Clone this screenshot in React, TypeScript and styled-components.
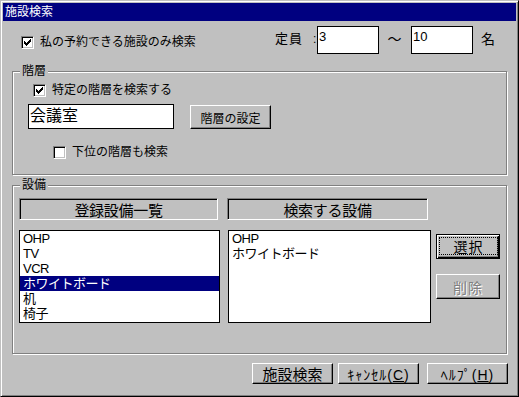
import React from "react";
import styled, { createGlobalStyle } from "styled-components";

const GlobalStyle = createGlobalStyle`
  html, body { margin: 0; padding: 0; background: #c0c0c0; }
  body {
    font-family: "Liberation Sans", "Noto Sans CJK JP", sans-serif;
    font-size: 12px;
    color: #000;
  }
  * { box-sizing: border-box; }
`;

const Window = styled.div`
  width: 519px;
  height: 397px;
  background: #c0c0c0;
  border: 1px solid;
  border-color: #c0c0c0 #000 #000 #c0c0c0;
  box-shadow: inset 1px 1px #fff, inset -1px -1px #808080;
  padding: 2px;
  display: flex;
  flex-direction: column;
`;

const TitleBar = styled.div`
  height: 18px;
  background: #000080;
  color: #fff;
  font-size: 12px;
  line-height: 18px;
  padding-left: 2px;
  white-space: nowrap;
`;

const Body = styled.div`
  display: flex;
  flex-direction: column;
  padding: 5px 9px 0;
`;

const TopRow = styled.div`
  display: flex;
  align-items: flex-start;
  height: 28px;
`;

const CheckOption = styled.div<{ $ml: number; $mt: number }>`
  display: flex;
  align-items: center;
  gap: 6px;
  height: 13px;
  margin-left: ${(p) => p.$ml}px;
  margin-top: ${(p) => p.$mt}px;
  font-size: 12px;
  line-height: 13px;
  white-space: nowrap;
`;

const Box = styled.span`
  width: 13px;
  height: 13px;
  flex: none;
  background: #fff;
  border: 1px solid;
  border-color: #808080 #fff #fff #808080;
  box-shadow: inset 1px 1px #000, inset -1px -1px #c0c0c0;
  display: flex;
  align-items: center;
  justify-content: center;
`;

const Capacity = styled.div`
  display: flex;
  align-items: flex-start;
  margin-left: auto;
  margin-right: 11px;
`;

const CapText = styled.span<{ $w?: number; $mt: number; $fs: number; $center?: boolean; $ml?: number }>`
  ${(p) => (p.$w ? `width: ${p.$w}px;` : "")}
  margin-top: ${(p) => p.$mt}px;
  margin-left: ${(p) => p.$ml ?? 0}px;
  font-size: ${(p) => p.$fs}px;
  line-height: 14px;
  text-align: ${(p) => (p.$center ? "center" : "left")};
  letter-spacing: 1px;
  white-space: nowrap;
  flex: none;
`;

const EditBox = styled.div<{ $w: number; $h: number; $fs: number; $pt: number }>`
  width: ${(p) => p.$w}px;
  height: ${(p) => p.$h}px;
  flex: none;
  background: #fff;
  border: 1px solid #000;
  padding: ${(p) => p.$pt}px 0 0 1px;
  font-size: ${(p) => p.$fs}px;
  line-height: ${(p) => p.$fs + 1}px;
  white-space: nowrap;
`;

const Group = styled.div<{ $h: number; $mt?: number }>`
  height: ${(p) => p.$h}px;
  margin-top: ${(p) => p.$mt ?? 0}px;
  border: 1px solid #808080;
  box-shadow: inset 1px 1px #fff, 1px 1px #fff;
  display: flex;
  flex-direction: column;
`;

const Legend = styled.div`
  align-self: flex-start;
  margin: -9px 0 0 7px;
  padding: 0 2px;
  height: 16px;
  line-height: 16px;
  font-size: 12px;
  background: #c0c0c0;
`;

const Row = styled.div<{ $ml: number; $mt: number }>`
  display: flex;
  align-items: flex-start;
  margin-left: ${(p) => p.$ml}px;
  margin-top: ${(p) => p.$mt}px;
`;

const Button = styled.div<{ $w: number; $h: number; $fs: number; $ml?: number; $mt?: number; $ls?: number }>`
  width: ${(p) => p.$w}px;
  height: ${(p) => p.$h}px;
  margin-left: ${(p) => p.$ml ?? 0}px;
  margin-top: ${(p) => p.$mt ?? 0}px;
  flex: none;
  border: 1px solid;
  border-color: #fff #000 #000 #fff;
  box-shadow: inset -1px -1px #808080;
  display: flex;
  align-items: center;
  justify-content: center;
  font-size: ${(p) => p.$fs}px;
  letter-spacing: ${(p) => p.$ls ?? 0}px;
  white-space: nowrap;
`;

const DefaultButton = styled(Button)`
  border: 1px solid #000;
  box-shadow: inset 1px 1px #fff, inset -1px -1px #000, inset -2px -2px #808080;
  align-items: stretch;
`;

const FocusRing = styled.span`
  flex: 1;
  margin: 2px 1px 3px 2px;
  border: 1px dotted #000;
  display: flex;
  align-items: center;
  justify-content: center;
`;

const DisabledLabel = styled.span`
  color: #808080;
  text-shadow: 1px 1px #fff;
`;

const Header = styled.div<{ $w: number; $ml?: number }>`
  width: ${(p) => p.$w}px;
  height: 22px;
  margin-left: ${(p) => p.$ml ?? 0}px;
  border: 1px solid;
  border-color: #808080 #fff #fff #808080;
  box-shadow: inset 1px 1px #000;
  display: flex;
  align-items: center;
  justify-content: center;
  font-size: 15px;
  letter-spacing: -0.3px;
  white-space: nowrap;
`;

const ListBox = styled.div<{ $w: number; $ml?: number }>`
  width: ${(p) => p.$w}px;
  height: 93px;
  margin-left: ${(p) => p.$ml ?? 0}px;
  background: #fff;
  border: 1px solid #000;
  display: flex;
  flex-direction: column;
  overflow: hidden;
`;

const ListItem = styled.div<{ $selected?: boolean }>`
  height: 15px;
  flex: none;
  padding: 1px 0 0 3px;
  font-size: 13px;
  line-height: 14px;
  letter-spacing: -0.5px;
  white-space: nowrap;
  background: ${(p) => (p.$selected ? "#000080" : "transparent")};
  color: ${(p) => (p.$selected ? "#fff" : "#000")};
`;

const SideButtons = styled.div`
  display: flex;
  flex-direction: column;
  margin-left: 5px;
`;

const ButtonRow = styled.div`
  display: flex;
  justify-content: flex-end;
  margin-top: 9px;
  margin-right: -1px;
`;

const Check = () => (
  <svg width="7" height="7" viewBox="0 0 7 7" shapeRendering="crispEdges">
    <path
      fill="#000"
      d="M6 0h1v1h-1z M5 1h2v1h-2z M0 2h1v1h-1z M4 2h3v1h-3z M0 3h2v1h-2z M3 3h3v1h-3z M0 4h5v1h-5z M1 5h3v1h-3z M2 6h1v1h-1z"
    />
  </svg>
);

const CheckBox = ({ checked }: { checked?: boolean }) => <Box>{checked ? <Check /> : null}</Box>;

const registered = ["OHP", "TV", "VCR", "ホワイトボード", "机", "椅子"];
const selected = ["OHP", "ホワイトボード"];

export default function App() {
  return (
    <>
      <GlobalStyle />
      <Window>
        <TitleBar>施設検索</TitleBar>
        <Body>
          <TopRow>
            <CheckOption $ml={9} $mt={10}>
              <CheckBox checked />
              <span>私の予約できる施設のみ検索</span>
            </CheckOption>
            <Capacity>
              <CapText $w={38} $mt={6} $fs={13}>定員</CapText>
              <CapText $w={4} $mt={6} $fs={12}>:</CapText>
              <EditBox $w={62} $h={28} $fs={13} $pt={3}>3</EditBox>
              <CapText $w={32} $mt={6} $fs={14} $center>～</CapText>
              <EditBox $w={62} $h={28} $fs={13} $pt={3}>10</EditBox>
              <CapText $mt={6} $fs={14} $ml={8}>名</CapText>
            </Capacity>
          </TopRow>

          <Group $h={104} $mt={17}>
            <Legend>階層</Legend>
            <CheckOption $ml={20} $mt={5}>
              <CheckBox checked />
              <span>特定の階層を検索する</span>
            </CheckOption>
            <Row $ml={15} $mt={7}>
              <EditBox $w={146} $h={25} $fs={16} $pt={2}>会議室</EditBox>
              <Button $w={81} $h={24} $fs={12} $ml={16} $mt={1}>階層の設定</Button>
            </Row>
            <CheckOption $ml={40} $mt={17}>
              <CheckBox />
              <span>下位の階層も検索</span>
            </CheckOption>
          </Group>

          <Group $h={169} $mt={10}>
            <Legend>設備</Legend>
            <Row $ml={6} $mt={5}>
              <Header $w={199}>登録設備一覧</Header>
              <Header $w={201} $ml={9}>検索する設備</Header>
            </Row>
            <Row $ml={6} $mt={10}>
              <ListBox $w={201}>
                {registered.map((item) => (
                  <ListItem key={item} $selected={item === "ホワイトボード"}>
                    {item}
                  </ListItem>
                ))}
              </ListBox>
              <ListBox $w={203} $ml={8}>
                {selected.map((item) => (
                  <ListItem key={item}>{item}</ListItem>
                ))}
              </ListBox>
              <SideButtons>
                <DefaultButton $w={64} $h={25} $fs={14} $mt={4} $ls={1}>
                  <FocusRing>選択</FocusRing>
                </DefaultButton>
                <Button $w={64} $h={25} $fs={14} $mt={15} $ls={1}>
                  <DisabledLabel>削除</DisabledLabel>
                </Button>
              </SideButtons>
            </Row>
          </Group>

          <ButtonRow>
            <Button $w={81} $h={21} $fs={15}>施設検索</Button>
            <Button $w={81} $h={21} $fs={14} $ml={5} $ls={1}>
              <span>
                ｷｬﾝｾﾙ(<u>C</u>)
              </span>
            </Button>
            <Button $w={81} $h={21} $fs={14} $ml={8} $ls={1}>
              <span>
                ﾍﾙﾌﾟ(<u>H</u>)
              </span>
            </Button>
          </ButtonRow>
        </Body>
      </Window>
    </>
  );
}
